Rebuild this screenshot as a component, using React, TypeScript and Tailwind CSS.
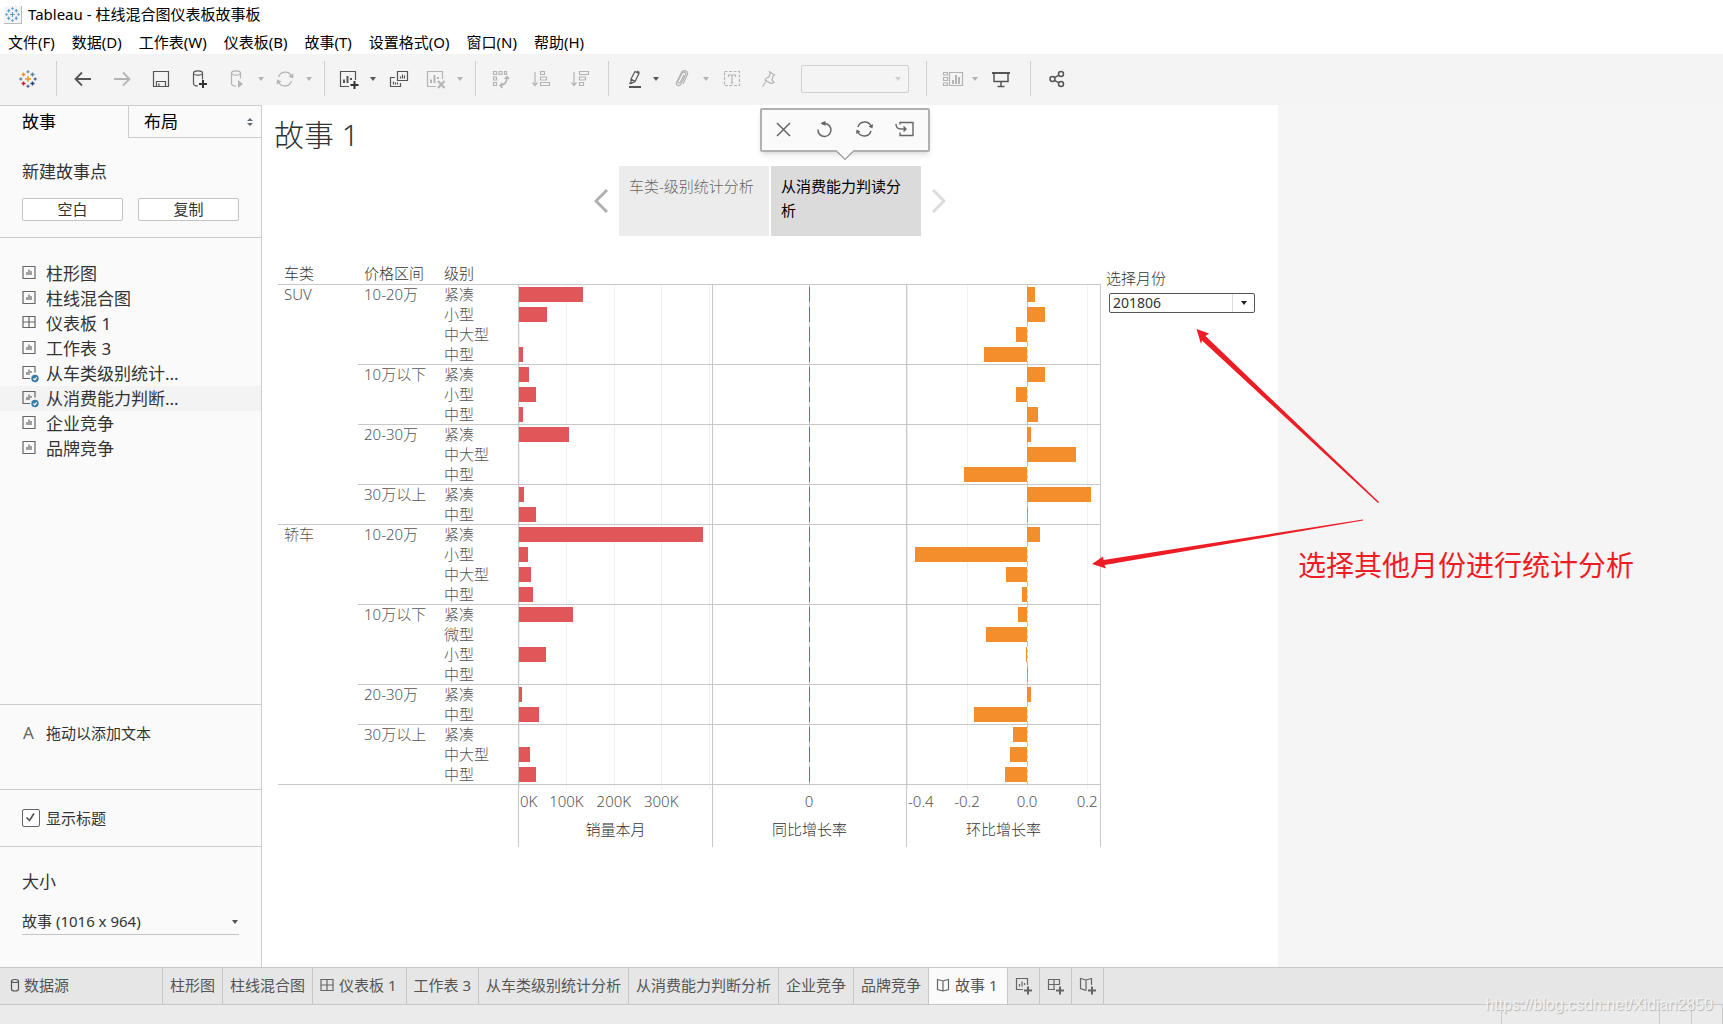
import React, { useState } from "react";
import clsx from "clsx";

type IconName =
  | "back"
  | "forward"
  | "save"
  | "dataAdd"
  | "dataRun"
  | "refresh"
  | "sheetAdd"
  | "duplicate"
  | "sheetClear"
  | "swap"
  | "sortAsc"
  | "sortDesc"
  | "highlight"
  | "clip"
  | "label"
  | "pin"
  | "cards"
  | "present"
  | "share"
  | "close"
  | "undo"
  | "update"
  | "saveNew"
  | "sheet"
  | "sheetUsed"
  | "dashboard"
  | "story"
  | "database"
  | "newSheet"
  | "newDashboard"
  | "newStory";

const PLUS = "M14 9.500v8M10 13.500h8";

const ICONS: Record<IconName, React.ReactNode> = {
  back: <path strokeWidth="1.8" d="M17 9H2M8 2.5 1.5 9 8 15.5" />,
  forward: <path strokeWidth="1.8" d="M1 9h15M10 2.5 16.5 9 10 15.5" />,
  save: <path d="M1.5 1.5h15v15h-15zM4.5 16.500v-5h9v5M7 16.500v-3" />,
  dataAdd: (
    <>
      <path d="M2.500 3.500v10c0 1.500 2 2.500 4.500 2.500M11.500 3.500v6" />
      <ellipse cx="7" cy="3" rx="4.5" ry="2.200" />
      <path stroke="#333" strokeWidth="2" d="M12 10v8M8 14h8" />
    </>
  ),
  dataRun: (
    <>
      <path d="M2.500 3.500v10c0 1.500 2 2.500 4.500 2.500M11.500 3.500v5" />
      <ellipse cx="7" cy="3" rx="4.5" ry="2.200" />
      <path fill="currentColor" stroke="none" d="m9 10 5 4-5 4z" />
    </>
  ),
  refresh: (
    <>
      <path d="M2.500 7a7 7 0 0 1 13-1M15.500 11a7 7 0 0 1-13 1" />
      <path fill="currentColor" stroke="none" d="m17.500 3.500-.5 5-4.500-2zM.5 14.500l.5-5 4.500 2z" />
    </>
  ),
  sheetAdd: (
    <>
      <path d="M10 16.500H1.500v-15h15V10" />
      <path strokeWidth="2" d="M5 13V9.500M8.500 13V6M12 10V8" />
      <path stroke="#333" strokeWidth="2" d="M15.500 11v8M11.500 15h8" />
    </>
  ),
  duplicate: (
    <>
      <path d="M7.500 1.500h10v9h-10zM5 7.500H.5v9h10V13" />
      <path d="M10.500 8.500v-2M12.500 8.500v-4M14.500 8.500v-3M3.500 14.500v-3M5.500 14.500v-2M7.500 14.500v-2" />
    </>
  ),
  sheetClear: (
    <>
      <path d="M10 16.500H1.500v-15h15V9" />
      <path strokeWidth="2" d="M5 13V9.500M8.500 13V5M12 9V7" />
      <path strokeWidth="2" d="m12 11 6.500 7M18.500 11 12 18" />
    </>
  ),
  swap: (
    <>
      <path d="M1.500 1.500h3v3h-3zM7 1.500h3v3H7zM12.500 1.500h2v3h-2zM1.500 7h3v3h-3zM1.500 12.500h3v3h-3z" />
      <path strokeWidth="1.500" d="M15 7c0 5-2 8-7 8.500M12.500 9 15 6.500 17 9M10.500 13 8 15.500l2.500 2.500" />
    </>
  ),
  sortAsc: <path d="M3 2v13M.5 12.500 3 15.500l2.500-3M8.500 1.500h4v3h-4zM8.500 7h6v3h-6zM8.500 12.500h9v3h-9z" />,
  sortDesc: <path d="M3 2v13M.5 12.500 3 15.500l2.500-3M8.500 1.500h9v3h-9zM8.500 7h6v3h-6zM8.500 12.500h4v3h-4z" />,
  highlight: (
    <>
      <path d="m5 9 4-7.500 4 2L9 11.500 5 13.500zM5 9l4 2.500M3 13l2 .5M11 1l2.500 1.500" />
      <path strokeWidth="2" d="M3 17h12" />
    </>
  ),
  clip: <path d="m6 11 4-7.500c1.500-2.500 4.500-1 3.500 1.500L9 14c-1.500 3-5.500 1.500-4.500-1.500l5-10c2-3.500 7-1.500 6 2L11 14M6 11c-1 2 1.500 3 2.500 1l3.500-7" />,
  label: (
    <>
      <path strokeDasharray="3 1.500" d="M1.500 1.500h15v14h-15z" />
      <path d="M5.500 7V5h7v2M9 5v8M7.500 13h3" />
    </>
  ),
  pin: <path d="m9 1.500 5.500 3.500-1.500 1-1 4 2 2.500-3 1-6-3.500 1.500-2 2.500-1 1.500-4zM6 11.500l-3.500 5" />,
  cards: (
    <>
      <path d="M.5 2.500h4v2.500h-4zM.5 7.500h4v3h-4zM.5 13h4v2.500h-4zM6.500 2.500h13v13h-13z" />
      <path strokeWidth="2" d="M10 14v-4M13 14V5M16 14V7" />
    </>
  ),
  present: (
    <>
      <path strokeWidth="2" d="M0 3h18" />
      <path strokeWidth="1.500" d="M2 3v8.500h14V3M9 12v4M5.500 16.500h7" />
    </>
  ),
  share: (
    <g strokeWidth="1.500">
      <circle cx="4.500" cy="9" r="2.500" />
      <circle cx="13" cy="4" r="2.500" />
      <circle cx="13" cy="14" r="2.500" />
      <path d="m6.500 7.700 4.500-2.500M6.500 10.300l4.500 2.500" />
    </g>
  ),
  close: <path strokeWidth="1.500" d="m2 3 13 13M15 3 2 16" />,
  undo: (
    <>
      <path strokeWidth="1.500" d="M6 4a6.500 6.500 0 1 1-4 5.500" />
      <path fill="currentColor" stroke="none" d="m4.500 3 5-2v5z" />
    </>
  ),
  update: (
    <>
      <path strokeWidth="1.500" d="M2 7a7 7 0 0 1 13-1M15 11a7 7 0 0 1-13 1" />
      <path fill="currentColor" stroke="none" d="m17 4-.5 4.500-4-2zM0 14l.5-4.500 4 2z" />
    </>
  ),
  saveNew: <path strokeWidth="1.400" d="M3 4.500v-2h13v13H3v-3M-1 4c0 3 2 5 5 5h5M6.500 6.500 9 9l-2.500 2.500" />,
  sheet: <path d="M3 3.500h12v12H3zM7 12v-3M9 12V6.500M11 12V8" />,
  sheetUsed: (
    <>
      <path d="M10 15.500H3v-12h12v6M7 12v-3M9 12V6.500M11 10V8" />
      <circle cx="15" cy="15.500" r="3.700" fill="#3a7ca5" stroke="none" />
      <path stroke="#fff" d="m13.500 15.500 1.200 1.300 2-2.500" />
    </>
  ),
  dashboard: <path d="M3 3.500h12v11H3zM9 3.500v11M3 9h12" />,
  story: <path d="M3.500 3.500 9 5l5.500-1.500v10L9 15l-5.500-1.500zM9 5v10" />,
  database: (
    <>
      <path d="M5.500 5v8c0 1.500 1.500 2 3.500 2s3.500-.5 3.500-2V5" />
      <ellipse cx="9" cy="5" rx="3.500" ry="1.500" />
    </>
  ),
  newSheet: (
    <>
      <path d="M9 12.500H2.500v-11h11V8M5.500 9.500V7M8 9.500V4.500M10.500 8V6" />
      <path strokeWidth="2" d={PLUS} />
    </>
  ),
  newDashboard: (
    <>
      <path d="M9 12.500H2.500v-10h11V8M8 2.500v10M2.500 7.500h11" />
      <path strokeWidth="2" d={PLUS} />
    </>
  ),
  newStory: (
    <>
      <path d="M8 13.500l-5.500-2v-10L8 3l5.500-1.500V8M8 3v10.500" />
      <path strokeWidth="2" d={PLUS} />
    </>
  ),
};

interface IconProps {
  name: IconName;
  className?: string;
}

const Icon: React.FC<IconProps> = ({ name, className }) => (
  <svg
    viewBox={
      name === "sheetAdd" || name === "sheetClear" || name === "cards"
        ? "0 0 20 18"
        : "0 0 18 18"
    }
    className={clsx("shrink-0 overflow-visible", className ?? "size-[18px]")}
    fill="none"
    stroke="currentColor"
    strokeWidth="1.2"
    aria-hidden="true"
  >
    {ICONS[name]}
  </svg>
);

const Caret = ({ className }: { className?: string }) => (
  <svg viewBox="0 0 6 4" className={clsx("h-1 w-1.5 shrink-0", className)} aria-hidden="true">
    <path d="M0 0h6L3 4z" fill="currentColor" />
  </svg>
);

const LOGO_MARKS = [
  { x: 9, y: 9, r: 3, color: "#eb912c" },
  { x: 4.5, y: 4.5, r: 2, color: "#eb912c" },
  { x: 13.5, y: 4.5, r: 2, color: "#59879b" },
  { x: 4.5, y: 13.5, r: 2, color: "#c72035" },
  { x: 13.5, y: 13.5, r: 2, color: "#1f447e" },
  { x: 9, y: 1.8, r: 1.5, color: "#7099a6" },
  { x: 9, y: 16.2, r: 1.5, color: "#5b6591" },
  { x: 1.8, y: 9, r: 1.5, color: "#59879b" },
  { x: 16.2, y: 9, r: 1.5, color: "#5b6591" },
];

const Logo = ({ color, className }: { color?: string; className: string }) => (
  <svg viewBox="0 0 18 18" className={clsx("shrink-0", className)} aria-hidden="true">
    {LOGO_MARKS.map(({ x, y, r, color: own }) => (
      <path
        key={`${x}-${y}`}
        d={`M${x - r} ${y}h${r * 2}M${x} ${y - r}v${r * 2}`}
        stroke={color ?? own}
        strokeWidth="1.4"
      />
    ))}
  </svg>
);

interface ToolProps {
  icon: IconName;
  label: string;
  className: string;
  disabled?: boolean;
}

const Tool: React.FC<ToolProps> = ({ icon, label, className, disabled }) => {
  const wide = icon === "sheetAdd" || icon === "sheetClear" || icon === "cards";

  return (
    <button
      type="button"
      aria-label={label}
      disabled={disabled}
      className={clsx("shrink-0", disabled ? "text-[#b4b4b4]" : "text-[#555]", className)}
    >
      <Icon name={icon} className={wide ? "h-[18px] w-5" : "size-[18px]"} />
    </button>
  );
};

const Separator = ({ className }: { className: string }) => (
  <span className={clsx("h-[35px] w-px shrink-0 bg-[#d0d0d0]", className)} />
);

const Toolbar = () => (
  <div className="flex h-[51px] items-center bg-[#f4f4f4] pb-0.5">
    <button type="button" aria-label="起始页" className="ml-[19px]">
      <Logo className="size-[18px]" />
    </button>
    <Separator className="ml-[19px]" />
    <Tool icon="back" label="撤消" className="ml-[17px]" />
    <Tool icon="forward" label="重做" className="ml-[21px]" disabled />
    <Tool icon="save" label="保存" className="ml-[21px]" />
    <Tool icon="dataAdd" label="新建数据源" className="ml-[21px]" />
    <Tool icon="dataRun" label="自动更新" className="ml-5" disabled />
    <Caret className="ml-[11px] text-[#b4b4b4]" />
    <Tool icon="refresh" label="运行更新" className="ml-3" disabled />
    <Caret className="ml-3 text-[#b4b4b4]" />
    <Separator className="ml-3" />
    <Tool icon="sheetAdd" label="新建工作表" className="ml-[14px]" />
    <Caret className="ml-[11px] text-[#555]" />
    <Tool icon="duplicate" label="复制工作表" className="ml-[14px]" />
    <Tool icon="sheetClear" label="清除工作表" className="ml-[18px]" disabled />
    <Caret className="ml-[11px] text-[#b4b4b4]" />
    <Separator className="ml-3" />
    <Tool icon="swap" label="交换行和列" className="ml-4" disabled />
    <Tool icon="sortAsc" label="升序" className="ml-[22px]" disabled />
    <Tool icon="sortDesc" label="降序" className="ml-[21px]" disabled />
    <Separator className="ml-[19px]" />
    <Tool icon="highlight" label="突出显示" className="ml-[17px]" />
    <Caret className="ml-[9px] text-[#555]" />
    <Tool icon="clip" label="对成员分组" className="ml-[13px]" disabled />
    <Caret className="ml-[13px] text-[#b4b4b4]" />
    <Tool icon="label" label="显示标记标签" className="ml-[14px]" disabled />
    <Tool icon="pin" label="固定轴" className="ml-[19px]" disabled />
    <div className="relative ml-[23px] flex">
      <select
        aria-label="适合"
        disabled
        className="h-7 w-[108px] appearance-none rounded-xs border border-[#d0d0d0] bg-[#f4f4f4]"
      />
      <Caret className="absolute top-3 right-2 text-[#d0d0d0]" />
    </div>
    <Separator className="ml-[17px]" />
    <Tool icon="cards" label="显示/隐藏卡" className="ml-4" disabled />
    <Caret className="ml-[9px] text-[#b4b4b4]" />
    <Tool icon="present" label="演示模式" className="ml-[14px]" />
    <Separator className="ml-5" />
    <Tool icon="share" label="共享" className="ml-[17px]" />
  </div>
);

const MENUS = [
  "文件(F)",
  "数据(D)",
  "工作表(W)",
  "仪表板(B)",
  "故事(T)",
  "设置格式(O)",
  "窗口(N)",
  "帮助(H)",
];

const SHEETS: { name: string; icon: IconName }[] = [
  { name: "柱形图", icon: "sheet" },
  { name: "柱线混合图", icon: "sheet" },
  { name: "仪表板 1", icon: "dashboard" },
  { name: "工作表 3", icon: "sheet" },
  { name: "从车类级别统计...", icon: "sheetUsed" },
  { name: "从消费能力判断...", icon: "sheetUsed" },
  { name: "企业竞争", icon: "sheet" },
  { name: "品牌竞争", icon: "sheet" },
];

const SidePanel = () => {
  const [showTitle, setShowTitle] = useState(true);

  return (
    <aside className="flex w-[262px] shrink-0 flex-col border-t border-r border-[#ccc] bg-[#fafafa] text-[#333]">
      <div className="flex h-8 text-[17px] text-black">
        <button type="button" className="w-32 pl-[22px] text-left">
          故事
        </button>
        <button
          type="button"
          className="flex flex-1 items-center justify-between border-b border-l border-[#ccc] pr-2 pl-[15px]"
        >
          布局
          <svg viewBox="0 0 6 8" className="h-2 w-1.5" aria-hidden="true">
            <path d="M0 3h6L3 0zM0 5h6L3 8z" fill="#5f6b76" />
          </svg>
        </button>
      </div>

      <section className="border-b border-[#ccc] px-[22px] pt-[22px] pb-4">
        <h2 className="text-[17px] leading-6">新建故事点</h2>
        <div className="mt-[14px] flex gap-[15px]">
          <button
            type="button"
            className="h-[23px] flex-1 rounded-xs border border-[#c4c4c4] bg-white text-[15px] leading-[19px]"
          >
            空白
          </button>
          <button
            type="button"
            className="h-[23px] flex-1 rounded-xs border border-[#c4c4c4] bg-white text-[15px] leading-[19px]"
          >
            复制
          </button>
        </div>
      </section>

      <ul className="flex-1 pt-[23px]">
        {SHEETS.map(({ name, icon }, index) => (
          <li
            key={name}
            className={clsx(
              "flex h-[25px] items-center gap-2 pl-5 text-[17px] leading-6",
              index === 5 && "bg-[#f3f3f3]"
            )}
          >
            <Icon name={icon} className="mb-1 size-[18px] text-[#666]" />
            {name}
          </li>
        ))}
      </ul>

      <div className="flex h-[85px] items-start gap-3 border-t border-[#ccc] px-[23px] pt-4 text-[15px] leading-6">
        <span className="text-[17px] text-[#666]">A</span>
        拖动以添加文本
      </div>

      <label className="flex h-[57px] items-center gap-1.5 border-t border-[#ccc] px-[22px] text-[15px]">
        <span className="relative flex">
          <input
            type="checkbox"
            checked={showTitle}
            onChange={(e) => setShowTitle(e.target.checked)}
            className="size-[18px] appearance-none rounded-xs border border-[#666] bg-white"
          />
          {showTitle && (
            <svg viewBox="0 0 18 18" className="pointer-events-none absolute inset-0" aria-hidden="true">
              <path d="m4.500 8.500 3 3 4.500-7" fill="none" stroke="#555" strokeWidth="1.700" />
            </svg>
          )}
        </span>
        显示标题
      </label>

      <section className="h-[121px] border-t border-[#ccc] px-[22px] pt-[23px]">
        <h2 className="text-[17px] leading-6">大小</h2>
        <div className="relative mt-[14px] flex items-center">
          <select
            aria-label="大小"
            className="h-[27px] w-full appearance-none border-b border-[#c4c4c4] bg-transparent text-[15px]"
          >
            <option>故事 (1016 x 964)</option>
          </select>
          <Caret className="pointer-events-none absolute right-px text-[#555]" />
        </div>
      </section>
    </aside>
  );
};

interface Row {
  level: string;
  sales: number;
  growth: number;
}

interface PriceGroup {
  price: string;
  rows: Row[];
}

const row = (level: string, sales: number, growth: number): Row => ({ level, sales, growth });

// sales in thousands, growth as a ratio
const DATA: { type: string; groups: PriceGroup[] }[] = [
  {
    type: "SUV",
    groups: [
      {
        price: "10-20万",
        rows: [row("紧凑", 135, 0.027), row("小型", 59, 0.06), row("中大型", 0, -0.037), row("中型", 8, -0.143)],
      },
      {
        price: "10万以下",
        rows: [row("紧凑", 21, 0.06), row("小型", 36, -0.037), row("中型", 8, 0.037)],
      },
      {
        price: "20-30万",
        rows: [row("紧凑", 105, 0.013), row("中大型", 0, 0.163), row("中型", 0, -0.21)],
      },
      { price: "30万以上", rows: [row("紧凑", 11, 0.213), row("中型", 36, 0.003)] },
    ],
  },
  {
    type: "轿车",
    groups: [
      {
        price: "10-20万",
        rows: [row("紧凑", 388, 0.043), row("小型", 19, -0.373), row("中大型", 25, -0.07), row("中型", 30, -0.017)],
      },
      {
        price: "10万以下",
        rows: [row("紧凑", 114, -0.03), row("微型", 0, -0.137), row("小型", 57, -0.003), row("中型", 0, 0.003)],
      },
      { price: "20-30万", rows: [row("紧凑", 6, 0.013), row("中型", 42, -0.177)] },
      {
        price: "30万以上",
        rows: [row("紧凑", 0, -0.047), row("中大型", 23, -0.057), row("中型", 36, -0.073)],
      },
    ],
  },
];

interface Axis {
  title: string;
  min: number;
  max: number;
  ticks: { value: number; label: string; edge?: boolean }[];
}

const SALES_AXIS: Axis = {
  title: "销量本月",
  min: 0,
  max: 407,
  ticks: [
    { value: 0, label: "0K", edge: true },
    { value: 100, label: "100K" },
    { value: 200, label: "200K" },
    { value: 300, label: "300K" },
    { value: 400, label: "" },
  ],
};

const YOY_AXIS: Axis = { title: "同比增长率", min: -96, max: 97, ticks: [{ value: 0, label: "0" }] };

const MOM_AXIS: Axis = {
  title: "环比增长率",
  min: -0.4,
  max: 0.243,
  ticks: [
    { value: -0.4, label: "-0.4", edge: true },
    { value: -0.2, label: "-0.2" },
    { value: 0, label: "0.0" },
    { value: 0.2, label: "0.2" },
  ],
};

const percent = (axis: Axis, value: number) =>
  `${((value - axis.min) / (axis.max - axis.min)) * 100}%`;

interface BarCellProps {
  axis: Axis;
  value: number;
  barClass: string;
  first: boolean;
  last?: boolean;
}

const BarCell: React.FC<BarCellProps> = ({ axis, value, barClass, first, last }) => {
  const from = Math.min(0, value);
  const span = Math.abs(value) / (axis.max - axis.min);

  return (
    <td className={clsx("border-l border-[#c8c8c8] p-0", last && "border-r")}>
      <div className={clsx("relative h-5 border-t", first ? "border-[#c8c8c8]" : "border-transparent")}>
        {axis.ticks.map((tick) => (
          <span
            key={tick.value}
            className={clsx(
              "absolute bottom-0 border-l",
              first ? "top-0" : "-top-px",
              tick.value === 0 && axis.min < 0 ? "border-dashed border-[#c8c8c8]" : "border-[#f0f0f0]"
            )}
            style={{ left: percent(axis, tick.value) }}
          />
        ))}
        <span
          className={clsx("absolute top-0.5 h-[15px]", barClass)}
          style={{ left: percent(axis, from), width: `${span * 100}%` }}
        />
      </div>
    </td>
  );
};

const AxisCell = ({ axis, last }: { axis: Axis; last?: boolean }) => (
  <td className={clsx("h-[63px] border-t border-l border-[#c8c8c8] p-0 align-top", last && "border-r")}>
    <div className="relative h-[34px]">
      {axis.ticks.map((tick) => (
        <React.Fragment key={tick.value}>
          <span
            className="absolute top-0 h-1 border-l border-[#f0f0f0]"
            style={{ left: percent(axis, tick.value) }}
          />
          <span
            className={clsx("absolute top-1.5 leading-5", tick.edge ? "pl-px" : "-translate-x-1/2")}
            style={{ left: percent(axis, tick.value) }}
          >
            {tick.label}
          </span>
        </React.Fragment>
      ))}
    </div>
    <div className="text-center leading-5 text-[#333]">{axis.title}</div>
  </td>
);

const SalesTable = () => (
  <table className="w-full table-fixed border-separate border-spacing-0 text-[15px] leading-[19px] font-light text-[#555]">
    <colgroup>
      <col className="w-20" />
      <col className="w-20" />
      <col className="w-20" />
      <col />
      <col />
      <col className="w-[195px]" />
    </colgroup>
    <thead>
      <tr className="h-5 text-left text-[#333]">
        <th className="p-0 pb-px pl-1.5 font-light">车类</th>
        <th className="p-0 pb-px pl-1.5 font-light">价格区间</th>
        <th className="p-0 pb-px pl-1.5 font-light">级别</th>
        <th className="p-0" colSpan={3} />
      </tr>
    </thead>
    <tbody>
      {DATA.map(({ type, groups }) =>
        groups.map(({ price, rows }, groupIndex) =>
          rows.map(({ level, sales, growth }, rowIndex) => {
            const first = rowIndex === 0;

            return (
              <tr key={`${type}-${price}-${level}`} className="h-5">
                {first && groupIndex === 0 && (
                  <td
                    rowSpan={groups.reduce((sum, group) => sum + group.rows.length, 0)}
                    className="border-t border-[#c8c8c8] p-0 pl-1.5 align-top"
                  >
                    {type}
                  </td>
                )}
                {first && (
                  <td rowSpan={rows.length} className="border-t border-[#c8c8c8] p-0 pl-1.5 align-top">
                    {price}
                  </td>
                )}
                <td className={clsx("border-t p-0 pl-1.5", first ? "border-[#c8c8c8]" : "border-transparent")}>
                  {level}
                </td>
                <BarCell axis={SALES_AXIS} value={sales} barClass="bg-[#e15759]" first={first} />
                <BarCell axis={YOY_AXIS} value={0} barClass="min-w-px bg-[#4e79a7]" first={first} />
                <BarCell axis={MOM_AXIS} value={growth} barClass="bg-[#f28e2b]" first={first} last />
              </tr>
            );
          })
        )
      )}
    </tbody>
    <tfoot>
      <tr>
        <td colSpan={3} className="border-t border-[#c8c8c8] p-0" />
        <AxisCell axis={SALES_AXIS} />
        <AxisCell axis={YOY_AXIS} />
        <AxisCell axis={MOM_AXIS} last />
      </tr>
    </tfoot>
  </table>
);

const StoryPointMenu = () => (
  <div className="absolute bottom-[84px] -left-[11px] flex h-11 w-[170px] items-center justify-between rounded-xs border-2 border-[#b0b0b0] bg-[#fafafa] px-[13px] text-[#666] shadow-md">
    {(["close", "undo", "update", "saveNew"] as IconName[]).map((name) => (
      <button key={name} type="button" aria-label={name} className="-mt-0.5">
        <Icon name={name} />
      </button>
    ))}
    <svg
      viewBox="0 0 16 10"
      className="absolute top-full left-1/2 h-2.5 w-4 -translate-x-1/2 overflow-visible"
      aria-hidden="true"
    >
      <path d="M0-1h16v2.500L8 9.500 0 1.500z" fill="#fafafa" />
      <path d="M0 1.500 8 9.500l8-8" fill="none" stroke="#999" strokeWidth="1.200" />
    </svg>
  </div>
);

const StoryNavigator = () => (
  <nav className="flex h-[70px] items-center justify-center text-[15px] leading-6">
    <button type="button" aria-label="上一个" className="text-[#b0b0b0]">
      <svg viewBox="0 0 14 24" className="h-6 w-[14px]" fill="none" stroke="currentColor" strokeWidth="3">
        <path d="M13 1 2 12l11 11" />
      </svg>
    </button>
    <button
      type="button"
      className="ml-[11px] flex h-full w-[150px] items-start bg-[#ececec] px-2.5 pt-2 text-left font-light text-[#666]"
    >
      车类-级别统计分析
    </button>
    <div className="relative ml-0.5 h-full">
      <button
        type="button"
        className="flex h-full w-[150px] items-start bg-[#dbdbdb] px-2.5 pt-2 text-left text-black"
      >
        从消费能力判读分析
      </button>
      <StoryPointMenu />
    </div>
    <button type="button" aria-label="下一个" className="ml-[11px] text-[#dcdcdc]">
      <svg viewBox="0 0 14 24" className="h-6 w-[14px]" fill="none" stroke="currentColor" strokeWidth="3">
        <path d="m1 1 11 11L1 23" />
      </svg>
    </button>
  </nav>
);

const MonthFilter = () => (
  <div className="w-[177px] shrink-0 pt-[3px] pl-[5px]">
    <label htmlFor="month" className="block text-[15px] leading-[22px] font-light text-[#333]">
      选择月份
    </label>
    <div className="relative mt-1 ml-[3px] flex w-[146px] items-center">
      <select
        id="month"
        className="h-5 w-full appearance-none rounded-xs border border-[#555] bg-white pl-[3px] text-[14px] leading-[18px] text-[#333]"
      >
        <option>201806</option>
      </select>
      <span className="pointer-events-none absolute right-px flex h-[18px] w-[22px] items-center justify-center border-l border-[#ddd]">
        <Caret className="text-[#222]" />
      </span>
    </div>
  </div>
);

// Hand-drawn pointers from the note to the month filter and the bars.
const Annotation = () => (
  <div className="pointer-events-none absolute top-0 left-[830px] text-[#ee1c25]">
    <svg viewBox="0 0 300 480" className="h-[480px] w-[300px]" fill="currentColor" aria-hidden="true">
      <path d="m104.500 224 12.500 4.500-3.500 2.500L287 397l-1 1L110 235.500l-1 3.500z" />
      <path d="m0 459 11-7.500.5 3.500L271 414.500v1L12.500 460l1.500 3.500z" />
    </svg>
    <p className="absolute top-[440px] left-[206px] text-[28px] leading-10 whitespace-nowrap">
      选择其他月份进行统计分析
    </p>
  </div>
);

const StoryView = () => (
  <main className="relative flex-1 bg-[#f5f5f5]">
    <div className="h-full w-full max-w-[1016px] bg-white">
      <h1 className="h-[61px] pt-[10px] pl-3 text-[30px] leading-10 font-light text-[#333]">故事 1</h1>
      <StoryNavigator />
      <div className="mt-7 flex items-start pl-4">
        <div className="min-w-0 flex-1">
          <SalesTable />
        </div>
        <MonthFilter />
      </div>
    </div>
    <Annotation />
  </main>
);

const TABS: { name: string; icon?: IconName; active?: boolean }[] = [
  { name: "柱形图" },
  { name: "柱线混合图" },
  { name: "仪表板 1", icon: "dashboard" },
  { name: "工作表 3" },
  { name: "从车类级别统计分析" },
  { name: "从消费能力判断分析" },
  { name: "企业竞争" },
  { name: "品牌竞争" },
  { name: "故事 1", icon: "story", active: true },
];

const SheetTabs = () => (
  <div className="flex h-[38px] border-y border-[#c8c8c8] bg-[#e6e6e6] text-[15px] text-[#555]">
    <button type="button" className="flex w-[163px] shrink-0 items-center border-r border-[#c8c8c8] pb-0.5 pl-1.5">
      <Icon name="database" />
      数据源
    </button>
    {TABS.map(({ name, icon, active }) => (
      <button
        key={name}
        type="button"
        className={clsx(
          "flex shrink-0 items-center gap-[3px] border-r border-[#c8c8c8] pb-0.5",
          icon ? "pr-[9px] pl-[5px]" : "px-[7px]",
          active && "bg-[#fafafa]"
        )}
      >
        {icon && <Icon name={icon} className="size-[18px] text-[#666]" />}
        {name}
      </button>
    ))}
    {(["newSheet", "newDashboard", "newStory"] as IconName[]).map((name) => (
      <button
        key={name}
        type="button"
        aria-label={name}
        className="flex w-8 shrink-0 items-center justify-center border-r border-[#c8c8c8] text-[#666]"
      >
        <Icon name={name} />
      </button>
    ))}
  </div>
);

const StatusBar = () => (
  <footer className="relative flex h-[19px] justify-end bg-[#ebebeb]">
    <span className="w-[158px] border-l border-[#ccc]" />
    <span className="w-8 border-l border-[#ccc]" />
    <span className="w-8 border-x border-[#ccc]" />
    <a
      href="https://blog.csdn.net/Xidian2850"
      className="absolute right-2.5 bottom-[9px] font-['Liberation_Sans',sans-serif] text-[16px] leading-5 text-[#f2f2f2] [text-shadow:1px_1px_1px_#b4b4b4]"
    >
      https://blog.csdn.net/Xidian2850
    </a>
  </footer>
);

const App = () => (
  <div className="flex min-h-screen flex-col overflow-hidden bg-white font-['Noto_Sans','Noto_Sans_CJK_SC',sans-serif] text-black">
    <header>
      <div className="flex h-[29px] items-center gap-1.5 pl-1 text-[15px]">
        <span className="border-r border-b border-[#bbb] bg-[#f4f4f4] p-px">
          <Logo color="#5b9bc8" className="size-[15px]" />
        </span>
        Tableau - 柱线混合图仪表板故事板
      </div>
      <nav className="flex h-[25px] items-center gap-[17px] pl-2 text-[15px] leading-5">
        {MENUS.map((menu) => (
          <button key={menu} type="button">
            {menu}
          </button>
        ))}
      </nav>
      <Toolbar />
    </header>
    <div className="flex flex-1">
      <SidePanel />
      <StoryView />
    </div>
    <SheetTabs />
    <StatusBar />
  </div>
);

export default App;
